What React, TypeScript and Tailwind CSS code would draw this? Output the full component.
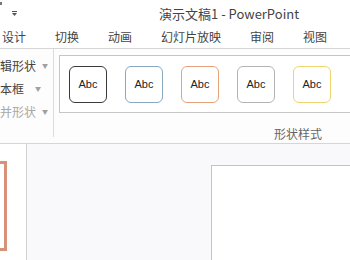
const font = { fontFamily: '"Noto Sans CJK SC", "Liberation Sans", sans-serif' };

const tabs = ['设计', '切换', '动画', '幻灯片放映', '审阅', '视图'];

const styles = [
  'border-[#3a3a3a]',
  'border-[#86a9bf]',
  'border-[#e3a47c]',
  'border-[#b4b4b4]',
  'border-[#f0d56e]',
];

function Caret() {
  return <span className="inline-block text-[6px] text-[#a0a0a0] leading-none">▼</span>;
}

export default function App() {
  return (
    <div className="w-[350px] h-[260px] overflow-hidden bg-white text-[#444]" style={font}>
      {/* Title bar */}
      <div className="h-[27px] flex items-center relative">
        <div className="absolute left-0 top-[2px] w-[2px] h-[3px] bg-[#777]" />
        <div className="ml-[12px] flex flex-col items-center gap-[1px]">
          <div className="w-[5px] h-[1px] bg-[#555]" />
          <svg width="5" height="3" viewBox="0 0 5 3"><path d="M0 0h5L2.5 3z" fill="#555" /></svg>
        </div>
        <div className="ml-[142px] text-[13px] text-[#444] whitespace-nowrap">演示文稿1 - PowerPoint</div>
      </div>

      {/* Tabs */}
      <div className="h-[22px] flex items-center border-b border-[#d6d6d6] pl-[2px] gap-[29px] text-[12px] text-[#444]">
        {tabs.map(t => (
          <span key={t} className="whitespace-nowrap leading-none pb-[2px]">{t}</span>
        ))}
      </div>

      {/* Ribbon */}
      <div className="h-[95px] flex border-b border-[#d6d6d6] bg-[#fdfdfd]">
        <div className="w-[54px] shrink-0 border-r border-[#dcdcdc] mb-[6px] pt-[9px] flex flex-col gap-[8px] text-[12px] leading-[15px]">
          <div className="flex items-center gap-[6px] whitespace-nowrap">辑形状 <Caret /></div>
          <div className="flex items-center gap-[11px] whitespace-nowrap">本框 <Caret /></div>
          <div className="flex items-center gap-[6px] whitespace-nowrap text-[#a8a8a8]">并形状 <Caret /></div>
        </div>
        <div className="flex-1 min-w-0 flex flex-col pl-[5px]">
          <div className="mt-[6px] h-[60px] border border-[#c6c6c6] border-r-0 bg-white flex items-center pl-[9px] gap-[18px]">
            {styles.map((s, i) => (
              <div
                key={i}
                className={`w-[38px] h-[37px] shrink-0 rounded-[6px] border ${i === 0 ? 'border-[1.5px]' : ''} ${s} flex items-center justify-center text-[11px] text-[#222]`}
                style={{ fontFamily: '"Liberation Sans", sans-serif' }}
              >
                Abc
              </div>
            ))}
          </div>
          <div className="pl-[215px] mt-[12px] text-[12px] text-[#666] whitespace-nowrap">形状样式</div>
        </div>
      </div>

      {/* Workspace */}
      <div className="flex h-[116px]">
        <div className="w-[27px] shrink-0 border-r border-[#d0d0d0] bg-white pt-[17px]">
          <div className="ml-[-30px] w-[37px] h-[90px] border-[3px] border-[#d6937a]" />
        </div>
        <div className="flex-1 min-w-0 overflow-hidden bg-[#f9f9fb] pl-[184px] pt-[21px]">
          <div className="w-[200px] h-[120px] bg-white border-l border-t border-[#c4c4c4]" />
        </div>
      </div>
    </div>
  );
}
